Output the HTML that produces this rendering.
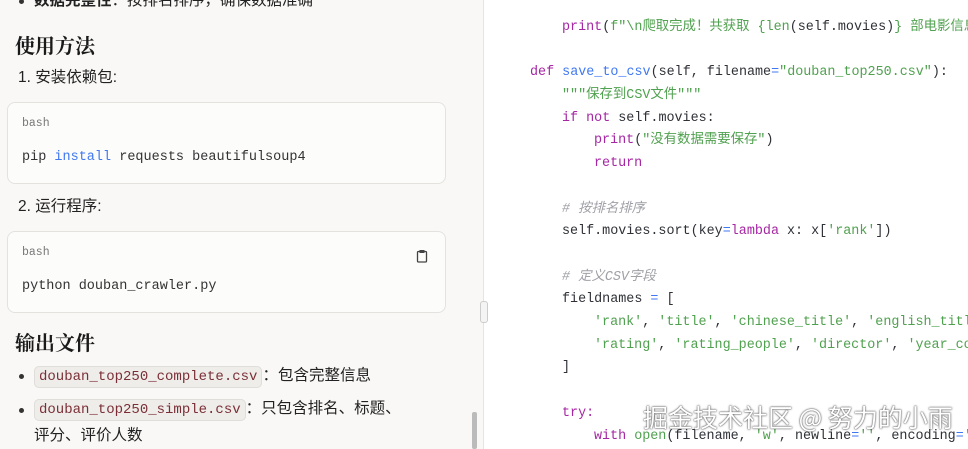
<!DOCTYPE html>
<html><head><meta charset="utf-8"><style>
*{margin:0;padding:0;box-sizing:border-box}
body{width:968px;height:449px;overflow:hidden;position:relative;background:#fff;font-family:"Liberation Sans","Noto Sans CJK SC",sans-serif;color:#222}
#left{position:absolute;left:0;top:0;width:484px;height:449px;background:#f9f8f6;border-right:1px solid #e6e4e0;overflow:hidden}
.t{position:absolute;font-size:15.5px;white-space:nowrap;line-height:22px}
h2{position:absolute;left:15px;font-size:20px;font-weight:bold;font-family:"Noto Serif CJK SC","Noto Sans CJK SC",serif;color:#1a1a1a;line-height:28px}
.box{position:absolute;left:7px;width:439px;background:#fcfcfb;border:1px solid #e4e2de;border-radius:8px}
.mono{font-family:"Liberation Mono","Noto Sans CJK SC",monospace}
.lang{position:absolute;left:14px;top:14px;font-size:11.5px;color:#777}
.cmd{position:absolute;left:14px;font-size:13.5px;color:#333}
.ic{background:#efedea;border:1px solid #e0deda;border-radius:5px;padding:2px 4px;color:#7a2f36;font-size:14px}
.dot{position:absolute;left:19px;width:5px;height:5px;background:#333;border-radius:50%}
#code{position:absolute;left:484px;top:0;width:484px;height:449px;overflow:hidden;font-family:"Liberation Mono","Noto Sans CJK SC",monospace;font-size:13.4px;color:#2f3137}
.l{position:absolute;white-space:pre;line-height:18px;height:18px}
.k{color:#a626a4}.s{color:#50a14f}.f{color:#4078f2}.c{color:#a0a1a7;font-style:italic}.o{color:#4078f2}
.wm{position:absolute;left:643px;top:400px;font-size:25px;color:#fff;font-family:"Noto Sans CJK SC",sans-serif;text-shadow:0 0 2px #555,0 0 1px #333;white-space:nowrap;line-height:34px}
</style></head><body>
<div id="left">
<div class="dot" style="top:-1px"></div>
<div class="t" style="left:34px;top:-10px"><b>数据完整性</b>：按排名排序，确保数据准确</div>
<h2 style="top:31px">使用方法</h2>
<div class="t" style="left:18px;top:67px">1. 安装依赖包:</div>
<div class="box" style="top:102px;height:82px"><div class="lang mono">bash</div><div class="cmd mono" style="top:47px">pip <span style="color:#4078f2">install</span> requests beautifulsoup4</div></div>
<div class="t" style="left:18px;top:196px">2. 运行程序:</div>
<div class="box" style="top:231px;height:82px"><div class="lang mono">bash</div><div class="cmd mono" style="top:47px">python douban_crawler.py</div>
<svg style="position:absolute;left:408px;top:17px" width="12" height="14" viewBox="0 0 12 14"><rect x="1.5" y="2.5" width="9" height="10.5" rx="1" fill="none" stroke="#444" stroke-width="1.3"/><rect x="3.5" y="1" width="5" height="3" fill="#444"/></svg></div>
<h2 style="top:328px">输出文件</h2>
<div class="dot" style="top:374px"></div>
<div class="t" style="left:34px;top:365px"><span class="ic mono">douban_top250_complete.csv</span>：包含完整信息</div>
<div class="dot" style="top:408px"></div>
<div class="t" style="left:34px;top:398px"><span class="ic mono">douban_top250_simple.csv</span>：只包含排名、标题、</div>
<div class="t" style="left:34px;top:425px">评分、评价人数</div>
<div style="position:absolute;left:472px;top:412px;width:5px;height:37px;background:#bbb;border-radius:2px"></div>
</div>
<div style="position:absolute;left:480px;top:301px;width:8px;height:22px;border:1px solid #ccc;border-radius:3px;background:#f4f4f4"></div>
<div id="code">
<div class="l" style="left:78px;top:19px"><span class="k">print</span>(<span class="s">f"\n爬取完成！共获取 {</span><span class="s">len</span>(self.movies)<span class="s">} 部电影信息</span></div>
<div class="l" style="left:46px;top:64px"><span class="k">def</span> <span class="f">save_to_csv</span>(self, filename<span class="o">=</span><span class="s">"douban_top250.csv"</span>):</div>
<div class="l s" style="left:78px;top:87px">"""保存到CSV文件"""</div>
<div class="l" style="left:78px;top:110px"><span class="k">if</span> <span class="k">not</span> self.movies:</div>
<div class="l" style="left:110px;top:132px"><span class="k">print</span>(<span class="s">"没有数据需要保存"</span>)</div>
<div class="l k" style="left:110px;top:155px">return</div>
<div class="l c" style="left:78px;top:201px"># 按排名排序</div>
<div class="l" style="left:78px;top:223px">self.movies.sort(key<span class="o">=</span><span class="k">lambda</span> x: x[<span class="s">'rank'</span>])</div>
<div class="l c" style="left:78px;top:269px"># 定义CSV字段</div>
<div class="l" style="left:78px;top:291px">fieldnames <span class="o">=</span> [</div>
<div class="l" style="left:110px;top:314px"><span class="s">'rank'</span>, <span class="s">'title'</span>, <span class="s">'chinese_title'</span>, <span class="s">'english_title'</span></div>
<div class="l" style="left:110px;top:337px"><span class="s">'rating'</span>, <span class="s">'rating_people'</span>, <span class="s">'director'</span>, <span class="s">'year_country'</span></div>
<div class="l" style="left:78px;top:359px">]</div>
<div class="l k" style="left:78px;top:405px">try:</div>
<div class="l" style="left:110px;top:428px"><span class="k">with</span> <span class="s">open</span>(filename, <span class="s">'w'</span>, newline<span class="o">=</span><span class="s">''</span>, encoding<span class="o">=</span><span class="s">'utf-8'</span></div>
</div>
<div class="wm">掘金技术社区 @ 努力的小雨</div>
</body></html>
